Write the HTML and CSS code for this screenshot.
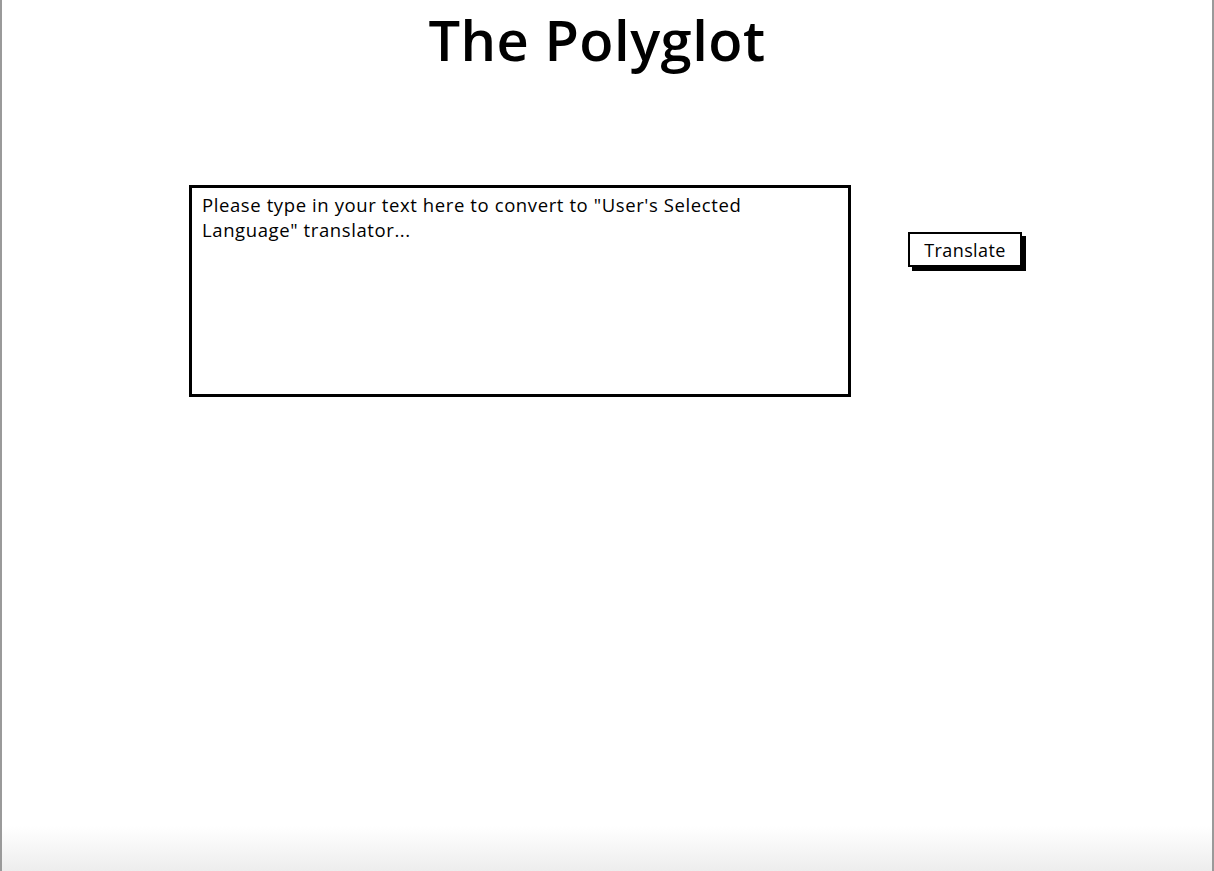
FILE: index.html
```html
<!DOCTYPE html>
<html>
<head>
<meta charset="utf-8">
<link rel="stylesheet" href="styles.css">
</head>
<body>
<div class="frame">
  <h1 class="title">The Polyglot</h1>
  <div class="row">
    <div class="textbox">Please type in your text here to convert to "User's Selected Language" translator...</div>
    <div class="btn-wrap"><button class="btn">Translate</button></div>
  </div>
  <div class="fade"></div>
</div>
</body>
</html>
```
FILE: styles.css
```css
html, body {
  margin: 0;
  padding: 0;
  height: 100%;
  background: #fff;
}
.frame {
  position: relative;
  box-sizing: border-box;
  height: 871px;
  border-left: 2px solid #9a9a9a;
  border-right: 2px solid #9a9a9a;
  background: #fff;
  overflow: hidden;
}
.title {
  margin: 0;
  padding-top: 4px;
  padding-right: 20px;
  text-align: center;
  font-family: "Open Sans", "Noto Sans", sans-serif;
  font-weight: 600;
  font-size: 56px;
  line-height: 70px;
  color: #000;
  letter-spacing: 0.5px;
}
.row {
  display: flex;
  align-items: flex-start;
  margin-top: 111px;
  padding-left: 187px;
}
.textbox {
  box-sizing: border-box;
  width: 662px;
  height: 212px;
  border: 3px solid #000;
  padding: 4px 70px 6px 10px;
  font-family: "Open Sans", "Noto Sans", sans-serif;
  font-weight: 500;
  font-size: 18.5px;
  letter-spacing: 0.6px;
  line-height: 25px;
  color: #000;
}
.btn-wrap {
  margin-left: 57px;
  margin-top: 47px;
}
.btn {
  box-sizing: border-box;
  width: 114px;
  height: 35px;
  border: 2px solid #000;
  background: #fff;
  box-shadow: 4px 4px 0 #000;
  font-family: "Open Sans", "Noto Sans", sans-serif;
  font-weight: 500;
  font-size: 18px;
  letter-spacing: 0.4px;
  color: #000;
  padding: 0;
}
.fade {
  position: absolute;
  left: 0;
  right: 0;
  bottom: 0;
  height: 45px;
  background: linear-gradient(#fff, #ededed);
}
```
